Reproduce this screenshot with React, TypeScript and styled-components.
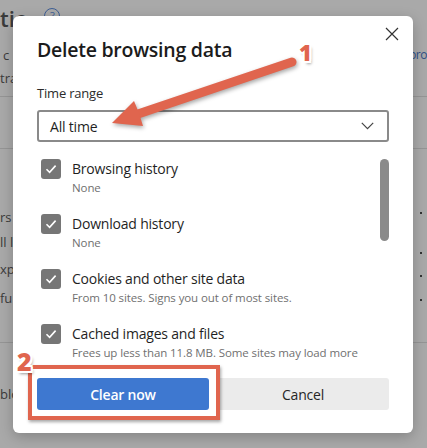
import React from "react";
import styled, { createGlobalStyle } from "styled-components";

const GlobalStyle = createGlobalStyle`
  html, body {
    margin: 0;
    padding: 0;
    background: #a9a9a9;
  }
  body {
    font-family: "Open Sans", "Noto Sans", sans-serif;
  }
`;

const ACCENT = "#e0654e";

/* ---------- dimmed page behind the dialog ---------- */

const Page = styled.div`
  position: relative;
  width: 427px;
  height: 448px;
  overflow: hidden;
  background: #a9a9a9;
  color: #3b3b3b;
`;

const PageRow = styled.div<{ h: number; line?: boolean }>`
  height: ${({ h }) => h}px;
  display: flex;
  align-items: flex-start;
  justify-content: space-between;
  box-sizing: border-box;
  border-bottom: ${({ line }) => (line ? "1px solid #959595" : "none")};
`;

const Fragment = styled.span<{ size?: number; top?: number; blue?: boolean; bold?: boolean }>`
  font-size: ${({ size }) => size ?? 13}px;
  font-weight: ${({ bold }) => (bold ? 600 : 400)};
  margin-top: ${({ top }) => top ?? 0}px;
  color: ${({ blue }) => (blue ? "#2f4f86" : "#3b3b3b")};
  line-height: 1;
  white-space: nowrap;
`;

const Dot = styled.span<{ top: number }>`
  width: 2px;
  height: 2px;
  background: #333;
  margin-top: ${({ top }) => top}px;
  margin-right: 5px;
`;

const HelpIcon = styled.span`
  width: 14px;
  height: 14px;
  border: 1.5px solid #3d5e95;
  border-radius: 50%;
  margin: 8px 0 0 16px;
  font-size: 11px;
  line-height: 14px;
  text-align: center;
  color: #3d5e95;
`;

/* ---------- dialog ---------- */

const Dialog = styled.div`
  position: absolute;
  left: 13px;
  top: 16px;
  width: 400px;
  height: 417px;
  box-sizing: border-box;
  padding: 20px 24px 23px;
  background: #fff;
  border-radius: 6px;
  box-shadow: 0 4px 14px rgba(0, 0, 0, 0.22);
  display: flex;
  flex-direction: column;
  color: #1f1f1f;
`;

const CloseButton = styled.button`
  position: absolute;
  right: 14px;
  top: 11px;
  width: 14px;
  height: 14px;
  padding: 0;
  border: none;
  background: none;
  display: flex;
`;

const Title = styled.h2`
  margin: 0;
  font-size: 19.5px;
  letter-spacing: -0.25px;
  line-height: 28px;
  font-weight: 600;
  color: #1b1b1b;
`;

const FieldLabel = styled.div`
  margin-top: 20px;
  font-size: 13px;
  letter-spacing: -0.2px;
  line-height: 18px;
  color: #2b2b2b;
`;

const Select = styled.div`
  margin-top: 8px;
  height: 32px;
  box-sizing: border-box;
  border: 2px solid #8a8a8a;
  border-radius: 3px;
  display: flex;
  align-items: center;
  justify-content: space-between;
  padding: 0 13px 0 11px;
  font-size: 14px;
  letter-spacing: -0.2px;
  color: #1f1f1f;
`;

const ListArea = styled.div`
  position: relative;
  height: 220px;
  overflow: hidden;
  padding-top: 17px;
  box-sizing: border-box;
  display: flex;
  flex-direction: column;
  gap: 18px;
`;

const Thumb = styled.div`
  position: absolute;
  right: 0;
  top: 17px;
  width: 9px;
  height: 82px;
  border-radius: 5px;
  background: #8a8a8a;
`;

const Item = styled.div`
  display: flex;
  gap: 11px;
  padding-left: 4px;
  flex-shrink: 0;
`;

const Box = styled.span`
  width: 20px;
  height: 20px;
  border-radius: 3px;
  background: #767676;
  display: flex;
  align-items: center;
  justify-content: center;
  flex-shrink: 0;
`;

const ItemText = styled.div`
  display: flex;
  flex-direction: column;
`;

const ItemLabel = styled.span`
  font-size: 14px;
  letter-spacing: -0.2px;
  line-height: 20px;
  color: #1f1f1f;
`;

const ItemHint = styled.span`
  margin-top: 1px;
  font-size: 11.5px;
  letter-spacing: -0.1px;
  line-height: 16px;
  color: #707070;
  white-space: nowrap;
`;

const Footer = styled.div`
  margin-top: auto;
  display: flex;
  gap: 8px;
`;

const Button = styled.button<{ primary?: boolean }>`
  flex: 1;
  height: 32px;
  border: none;
  border-radius: 3px;
  font-family: inherit;
  font-size: 14px;
  letter-spacing: -0.2px;
  font-weight: ${({ primary }) => (primary ? 600 : 400)};
  background: ${({ primary }) => (primary ? "#3e78d0" : "#ebebeb")};
  color: ${({ primary }) => (primary ? "#fff" : "#262626")};
`;

/* ---------- annotations ---------- */

const Overlay = styled.svg`
  position: absolute;
  inset: 0;
  pointer-events: none;
  filter: drop-shadow(1px 2px 2px rgba(0, 0, 0, 0.35));
`;

const Step = styled.span<{ x: number; y: number; size: number }>`
  position: absolute;
  left: ${({ x }) => x}px;
  top: ${({ y }) => y}px;
  font-size: ${({ size }) => size}px;
  font-weight: 800;
  line-height: 1;
  color: ${ACCENT};
  text-shadow: -2px 0 #fff, 2px 0 #fff, 0 -2px #fff, 0 2px #fff, -2px -2px #fff,
    2px -2px #fff, -2px 2px #fff, 2px 2px #fff, 2px 3px 3px rgba(0, 0, 0, 0.4);
`;

const Highlight = styled.div`
  position: absolute;
  left: 28px;
  top: 365px;
  width: 192px;
  height: 55px;
  box-sizing: border-box;
  border: 4px solid ${ACCENT};
  box-shadow: 1px 2px 3px rgba(0, 0, 0, 0.35), inset 0 0 0 1px #fff;
`;

const items = [
  { label: "Browsing history", hint: "None" },
  { label: "Download history", hint: "None" },
  { label: "Cookies and other site data", hint: "From 10 sites. Signs you out of most sites." },
  { label: "Cached images and files", hint: "Frees up less than 11.8 MB. Some sites may load more" },
];

const Check = () => (
  <svg width="14" height="14" viewBox="0 0 14 14">
    <path d="M2.5 7.3 L5.6 10.3 L11.6 3.6" fill="none" stroke="#fff" strokeWidth="1.6" />
  </svg>
);

export default function App() {
  return (
    <>
      <GlobalStyle />
      <Page>
        <PageRow h={44}>
          <div style={{ display: "flex" }}>
            <Fragment size={22} bold top={7}>tio</Fragment>
            <HelpIcon>?</HelpIcon>
          </div>
        </PageRow>
        <PageRow h={26}>
          <Fragment top={5} style={{ marginLeft: 3 }}>c</Fragment>
          <Fragment blue size={12} top={5} style={{ letterSpacing: -0.5, marginRight: 0 }}>pro</Fragment>
        </PageRow>
        <PageRow h={27} line>
          <Fragment top={2}>tra</Fragment>
        </PageRow>
        <PageRow h={52} line />
        <PageRow h={60}>
          <span />
          <Dot top={63} />
        </PageRow>
        <PageRow h={26}>
          <Fragment top={2}>rs a</Fragment>
          <Dot top={43} />
        </PageRow>
        <PageRow h={28}>
          <Fragment top={1}>ll l</Fragment>
        </PageRow>
        <PageRow h={28}>
          <Fragment top={0}>xpe</Fragment>
          <Dot top={12} />
        </PageRow>
        <PageRow h={52} line>
          <Fragment top={1}>fu</Fragment>
          <Dot top={8} />
        </PageRow>
        <PageRow h={60}>
          <Fragment top={45}>blo</Fragment>
        </PageRow>

        <Dialog>
          <CloseButton aria-label="Close">
            <svg width="14" height="14" viewBox="0 0 14 14">
              <path d="M1 1 L13 13 M13 1 L1 13" stroke="#333" strokeWidth="1.2" />
            </svg>
          </CloseButton>
          <Title>Delete browsing data</Title>
          <FieldLabel>Time range</FieldLabel>
          <Select>
            All time
            <svg width="13" height="8" viewBox="0 0 13 8">
              <path d="M0.8 0.8 L6.5 6.6 L12.2 0.8" fill="none" stroke="#444" strokeWidth="1.2" />
            </svg>
          </Select>
          <ListArea>
            {items.map((it) => (
              <Item key={it.label}>
                <Box>
                  <Check />
                </Box>
                <ItemText>
                  <ItemLabel>{it.label}</ItemLabel>
                  <ItemHint>{it.hint}</ItemHint>
                </ItemText>
              </Item>
            ))}
            <Thumb />
          </ListArea>
          <Footer>
            <Button primary>Clear now</Button>
            <Button>Cancel</Button>
          </Footer>
        </Dialog>

        <Overlay width="427" height="448" viewBox="0 0 427 448">
          <line x1="292" y1="62" x2="138" y2="114" stroke={ACCENT} strokeWidth="9" strokeLinecap="round" />
          <polygon points="112,123 134,101 139,113 143,126" fill={ACCENT} />
        </Overlay>
        <Highlight />
        <Step x={299} y={41} size={22}>1</Step>
        <Step x={17} y={349} size={25}>2</Step>
      </Page>
    </>
  );
}
